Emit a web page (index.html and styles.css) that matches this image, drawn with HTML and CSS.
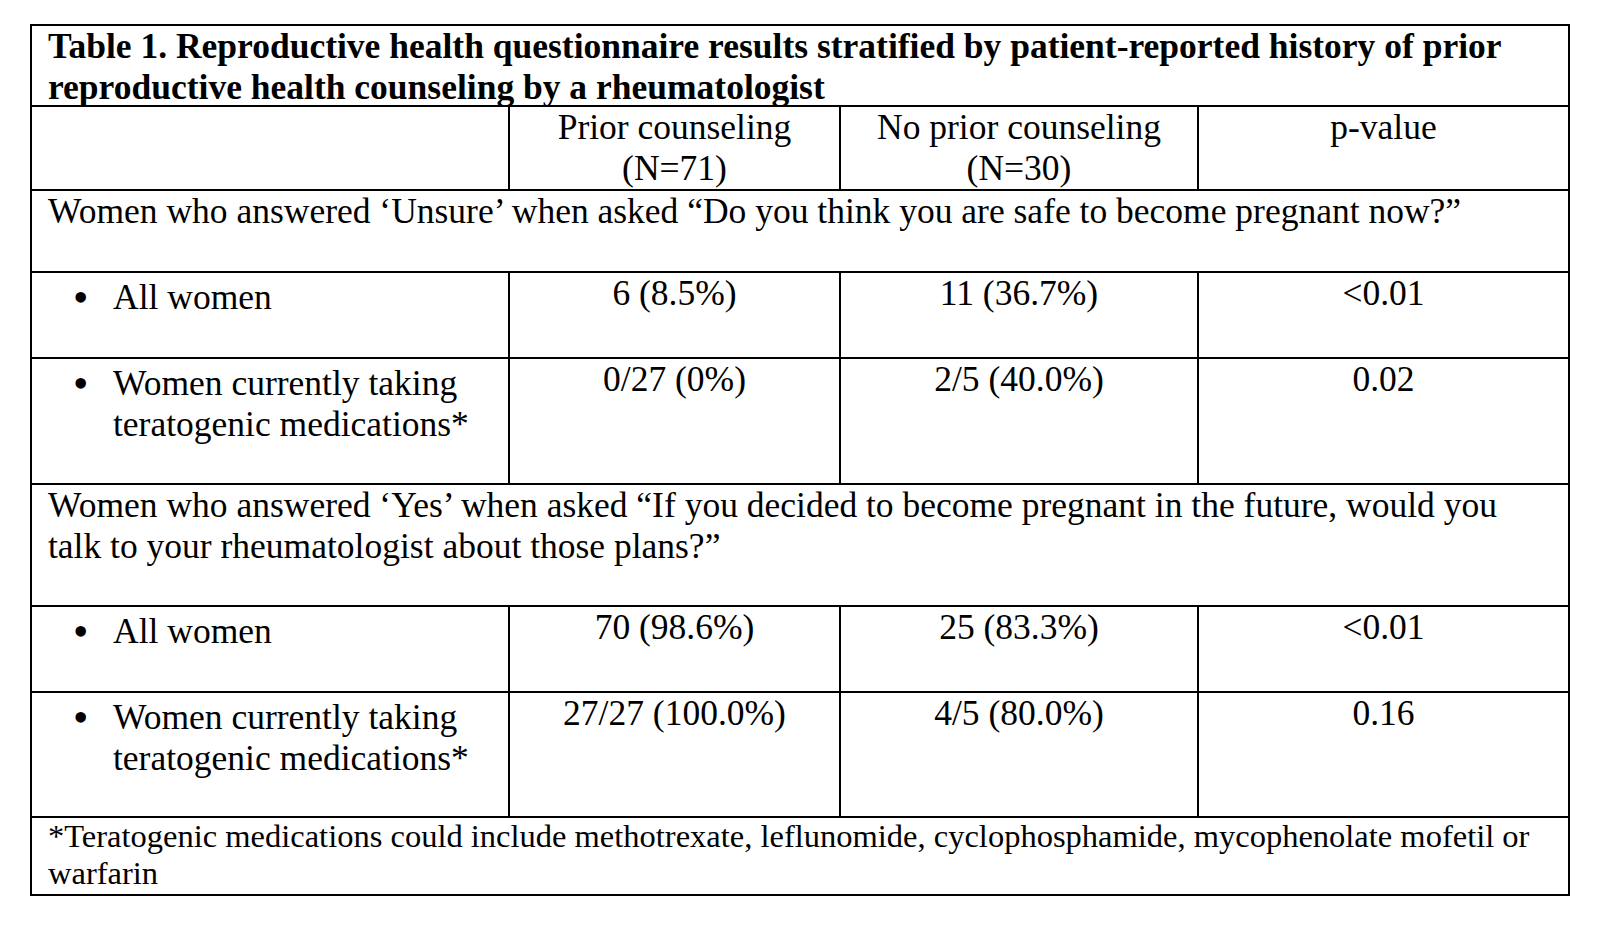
FILE: index.html
```html
<!DOCTYPE html>
<html lang="en">
<head>
<meta charset="utf-8">
<title>Table 1</title>
<link rel="stylesheet" href="styles.css">
</head>
<body>
<div class="page">
  <table class="results">
    <colgroup>
      <col class="c-label">
      <col class="c-prior">
      <col class="c-noprior">
      <col class="c-p">
    </colgroup>
    <tbody>
      <tr class="r-title">
        <td colspan="4" class="title"><div class="title-text">Table 1. Reproductive health questionnaire results stratified by patient-reported history of prior reproductive health counseling by a rheumatologist</div></td>
      </tr>
      <tr class="r-head">
        <td></td>
        <td class="num">Prior counseling<br>(N=71)</td>
        <td class="num">No prior counseling<br>(N=30)</td>
        <td class="num">p-value</td>
      </tr>
      <tr class="r-section1">
        <td colspan="4" class="section">Women who answered ‘Unsure’ when asked “Do you think you are safe to become pregnant now?”</td>
      </tr>
      <tr class="r-short">
        <td><div class="item"><span class="bullet">•</span><span class="item-text">All women</span></div></td>
        <td class="num">6 (8.5%)</td>
        <td class="num">11 (36.7%)</td>
        <td class="num">&lt;0.01</td>
      </tr>
      <tr class="r-tall">
        <td><div class="item"><span class="bullet">•</span><span class="item-text">Women currently taking teratogenic medications*</span></div></td>
        <td class="num">0/27 (0%)</td>
        <td class="num">2/5 (40.0%)</td>
        <td class="num">0.02</td>
      </tr>
      <tr class="r-section2">
        <td colspan="4" class="section">Women who answered ‘Yes’ when asked “If you decided to become pregnant in the future, would you talk to your rheumatologist about those plans?”</td>
      </tr>
      <tr class="r-short">
        <td><div class="item"><span class="bullet">•</span><span class="item-text">All women</span></div></td>
        <td class="num">70 (98.6%)</td>
        <td class="num">25 (83.3%)</td>
        <td class="num">&lt;0.01</td>
      </tr>
      <tr class="r-tall2">
        <td><div class="item"><span class="bullet">•</span><span class="item-text">Women currently taking teratogenic medications*</span></div></td>
        <td class="num">27/27 (100.0%)</td>
        <td class="num">4/5 (80.0%)</td>
        <td class="num">0.16</td>
      </tr>
      <tr class="r-foot">
        <td colspan="4" class="foot">*Teratogenic medications could include methotrexate, leflunomide, cyclophosphamide, mycophenolate mofetil or warfarin</td>
      </tr>
    </tbody>
  </table>
</div>
</body>
</html>
```
FILE: styles.css
```css
html, body {
  margin: 0;
  padding: 0;
  background: #ffffff;
}

.page {
  padding: 24px 0 0 30px;
  font-family: "Liberation Serif", "Times New Roman", serif;
  color: #000000;
}

.results {
  border-collapse: collapse;
  table-layout: fixed;
  width: 1538px;
  font-size: 35.5px;
  line-height: 41px;
}

.c-label { width: 478px; }
.c-prior { width: 331px; }
.c-noprior { width: 358px; }
.c-p { width: 371px; }

.results td {
  border: 2px solid #000000;
  padding: 0 16px;
  vertical-align: top;
}

.r-title { height: 80px; }
.r-head { height: 82px; }
.r-section1 { height: 82px; }
.r-short { height: 86px; }
.r-tall { height: 126px; }
.r-section2 { height: 122px; }
.r-tall2 { height: 125px; }
.r-foot { height: 78px; }

.title {
  font-weight: bold;
}

.title-text {
  height: 79px;
  overflow: visible;
}

.num {
  text-align: center;
}

.item {
  display: flex;
  align-items: flex-start;
  padding-top: 4px;
}

.bullet {
  flex: 0 0 40px;
  margin-left: 25px;
  font-size: 44px;
}

.item-text {
  flex: 1 1 auto;
}

.results .foot {
  font-size: 32.5px;
  line-height: 37px;
}
```
